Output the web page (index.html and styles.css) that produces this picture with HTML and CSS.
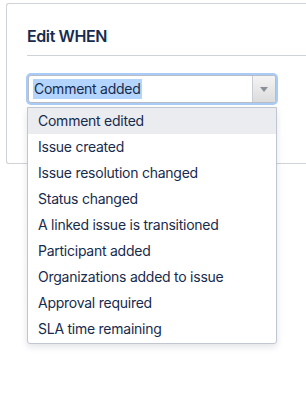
FILE: index.html
```html
<!DOCTYPE html>
<html lang="en">
<head>
    <meta charset="UTF-8">
    <meta name="viewport" content="width=device-width, initial-scale=1.0">
    <title>Edit WHEN</title>
    <link rel="stylesheet" href="styles.css">
</head>
<body>
    <div class="card">
        <h2>Edit WHEN</h2>
        <div class="select-wrap">
            <div class="select">
                <span class="select-value"><span class="selected-text">Comment added</span></span>
                <span class="select-arrow">
                    <svg width="8" height="5" viewBox="0 0 8 5"><path d="M0 0 L8 0 L4 5 Z" fill="#8a8f99"/></svg>
                </span>
            </div>
            <ul class="options">
                <li class="active">Comment edited</li>
                <li>Issue created</li>
                <li>Issue resolution changed</li>
                <li>Status changed</li>
                <li>A linked issue is transitioned</li>
                <li>Participant added</li>
                <li>Organizations added to issue</li>
                <li>Approval required</li>
                <li>SLA time remaining</li>
            </ul>
        </div>
    </div>
</body>
</html>
```

FILE: styles.css
```css
html, body {
    margin: 0;
    padding: 0;
    overflow: hidden;
}
body {
    font-family: Inter, "Noto Sans", sans-serif;
    color: #172b4d;
    background-color: #fff;
    width: 306px;
    height: 401px;
    padding: 3px 0 0 6px;
    box-sizing: border-box;
}
.card {
    width: 300px;
    height: 161px;
    border: 1px solid #cfd2d6;
    border-right: none;
    border-radius: 3px 0 0 3px;
    box-sizing: border-box;
    padding: 21px 0 0 20px;
}
h2 {
    margin: 0;
    font-size: 16px;
    font-weight: 600;
    letter-spacing: -0.4px;
    line-height: 22px;
    padding-bottom: 8px;
    border-bottom: 1px solid #cfd2d6;
}
.select-wrap {
    position: relative;
    width: 250px;
    margin-top: 19px;
}
.select {
    display: flex;
    height: 28px;
    border: 1px solid #b8bcc4;
    border-radius: 3px;
    box-shadow: 0 0 0 2px #a9cbf7;
    background-color: #fff;
    box-sizing: border-box;
    margin: 0 1px;
}
.select-value {
    flex: 1;
    display: flex;
    align-items: center;
    padding-left: 4px;
    font-size: 14px;
    letter-spacing: -0.25px;
}
.selected-text {
    background-color: #b3d4fc;
    line-height: 20px;
    padding: 0 1px;
}
.select-arrow {
    width: 22px;
    display: flex;
    align-items: center;
    justify-content: center;
    border-left: 1px solid #c9ccd1;
    background: linear-gradient(#f4f4f4, #dcdcdc);
    border-radius: 0 2px 2px 0;
}
.options {
    position: absolute;
    top: 32px;
    left: 0;
    width: 250px;
    margin: 0;
    padding: 0 0 1px;
    list-style: none;
    background-color: #fff;
    border: 1px solid #c1c7d0;
    border-radius: 0 0 3px 3px;
    box-shadow: 0 3px 6px rgba(9, 30, 66, 0.12);
    box-sizing: border-box;
}
.options li {
    height: 26px;
    line-height: 26px;
    padding-left: 10px;
    font-size: 14px;
    letter-spacing: -0.25px;
}
.options li.active {
    background-color: #ebecf0;
}
```
